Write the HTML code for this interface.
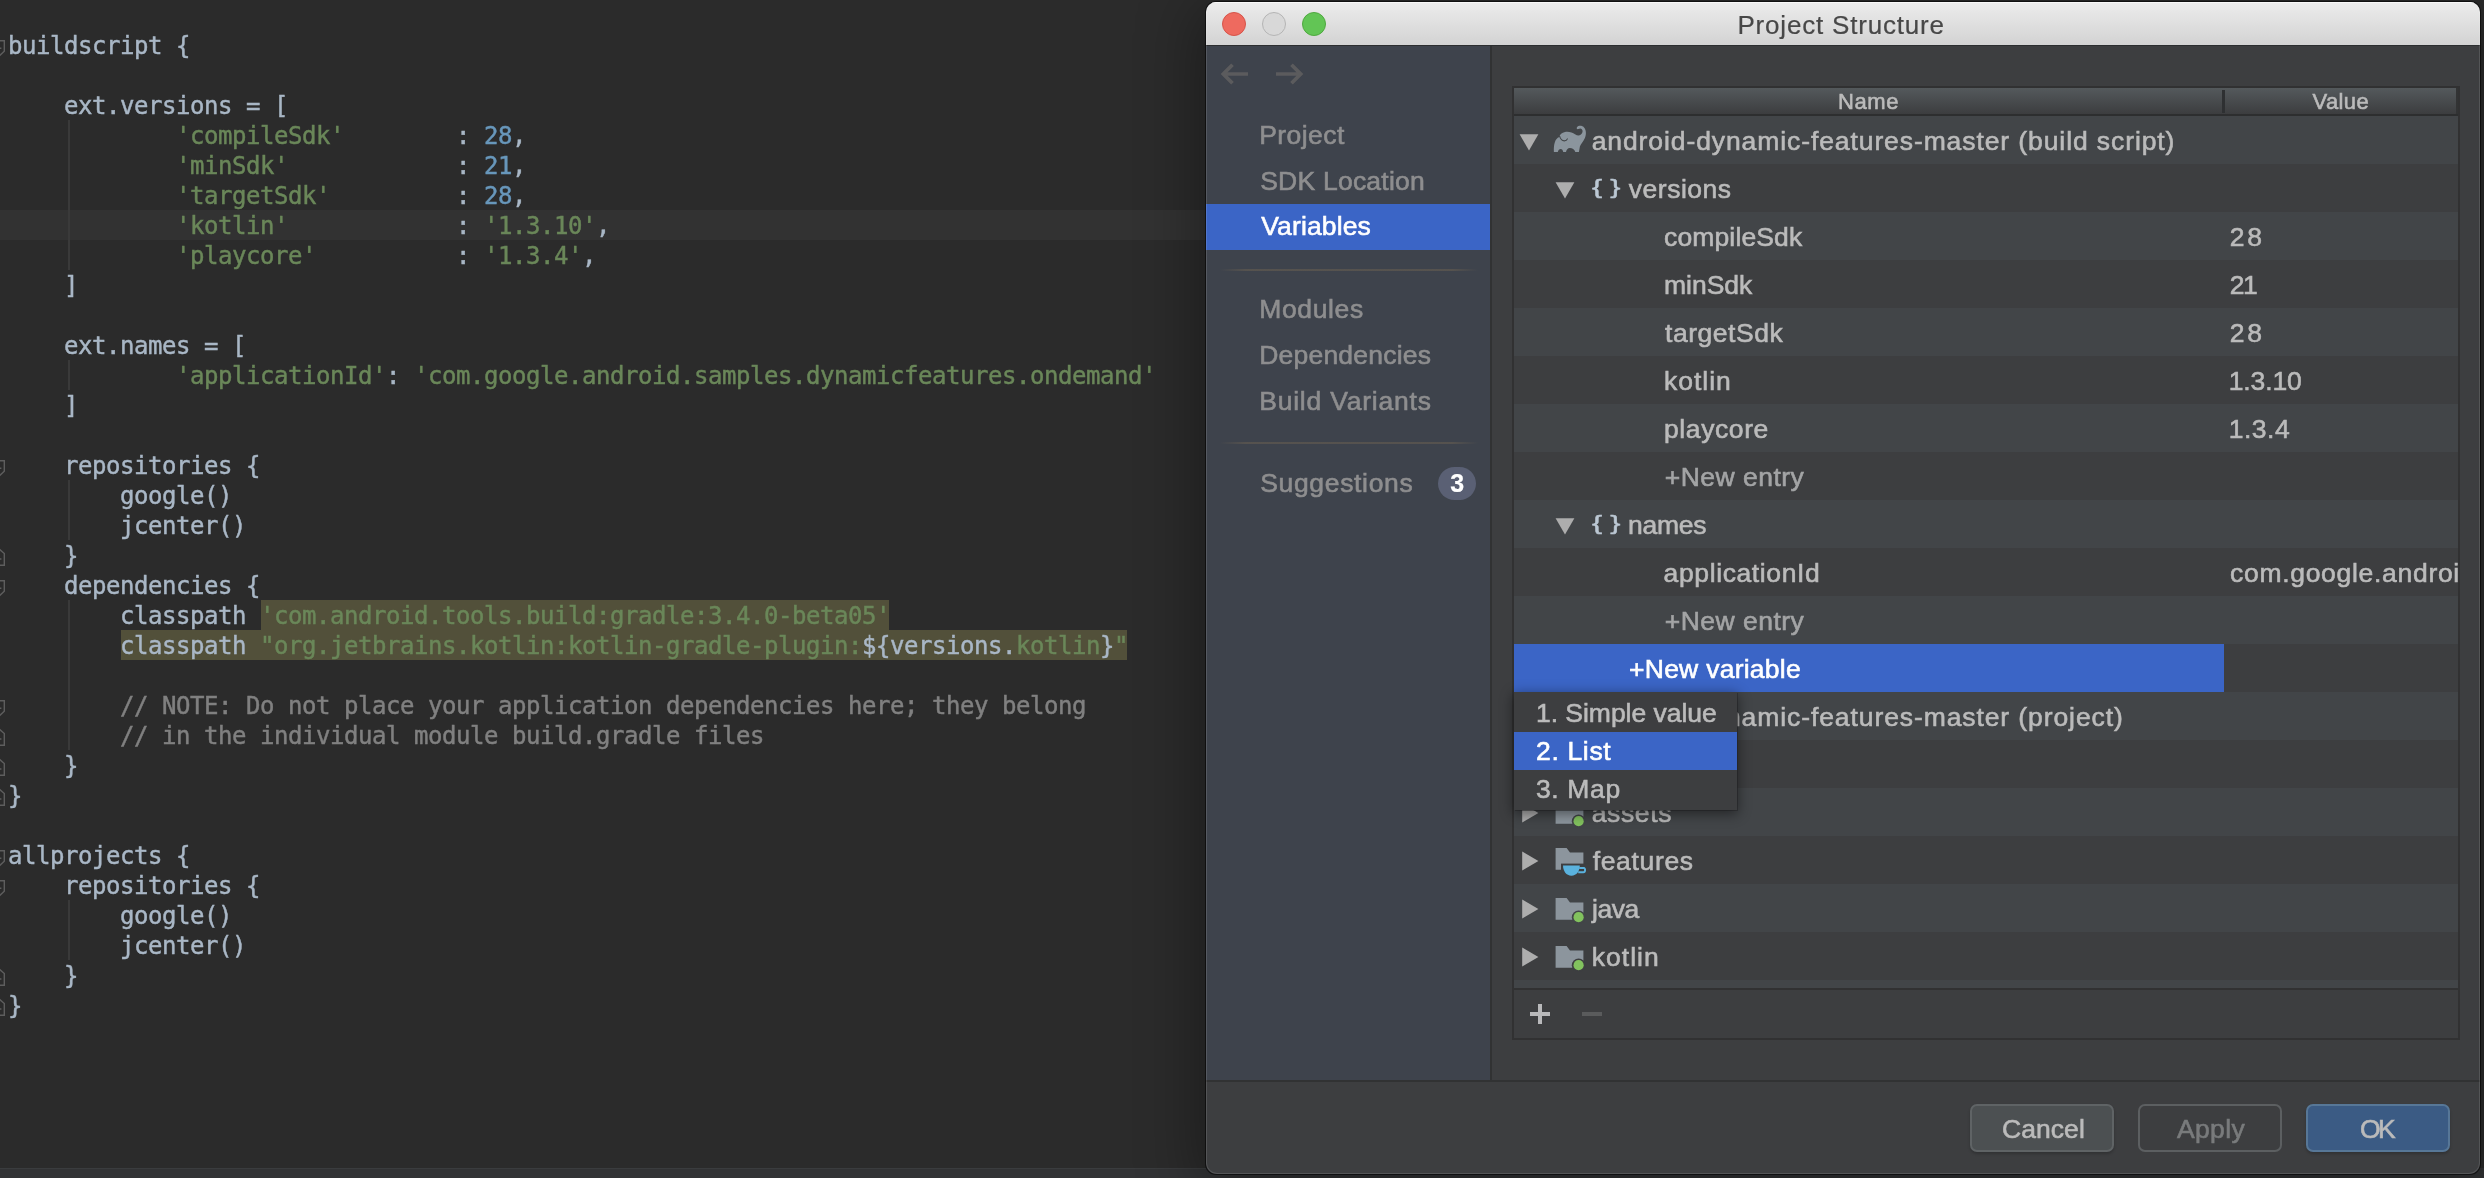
<!DOCTYPE html>
<html lang="en">
<head>
<meta charset="utf-8">
<title>Project Structure</title>
<style>
html,body{margin:0;padding:0}
body{width:2484px;height:1178px;background:#2b2b2b;overflow:hidden;position:relative;font-family:"Liberation Sans",sans-serif}
.abs{position:absolute}
.t{position:absolute;white-space:pre;line-height:40px;font-family:"Liberation Sans",sans-serif;-webkit-text-stroke:0.6px currentColor}
#editor{position:absolute;left:0;top:0;width:1210px;height:1178px;overflow:hidden;will-change:transform}
.ln{position:absolute;left:8px;height:30px;line-height:30px;white-space:pre;font-family:"DejaVu Sans Mono","Liberation Mono",monospace;font-size:24px;letter-spacing:-0.449px;color:#a9b7c6;-webkit-text-stroke:0.45px currentColor}
.s{color:#6a8759}.n{color:#6897bb}.c{color:#808080}
.hl{position:absolute;height:30px;background:#52503a}
.guide{position:absolute;width:2px;background:#3a3a3a}
#dialog{position:absolute;left:1206px;top:2px;width:1274px;height:1172px;border-radius:10px 10px 11px 11px;background:#3d3e40;overflow:hidden;will-change:transform}
#shadow{position:absolute;left:1206px;top:2px;width:1274px;height:1172px;border-radius:10px;box-shadow:0 12px 60px 8px rgba(0,0,0,0.36),0 0 0 1px rgba(0,0,0,0.55)}
</style>
</head>
<body>

<div id="editor">
<div class="abs" style="left:0;top:210px;width:1210px;height:30px;background:#323232"></div>
<div class="hl" style="left:261px;top:600px;width:628px"></div>
<div class="hl" style="left:121px;top:630px;width:1006px"></div>
<div class="guide" style="left:68px;top:120px;height:150px"></div>
<div class="guide" style="left:68px;top:360px;height:30px"></div>
<div class="guide" style="left:68px;top:480px;height:60px"></div>
<div class="guide" style="left:68px;top:600px;height:150px"></div>
<div class="guide" style="left:68px;top:900px;height:60px"></div>
<div class="ln" style="top:31px">buildscript {</div>
<div class="ln" style="top:91px">    ext.versions = [</div>
<div class="ln" style="top:121px">            <span class="s">&#x27;compileSdk&#x27;</span>        : <span class="n">28</span>,</div>
<div class="ln" style="top:151px">            <span class="s">&#x27;minSdk&#x27;</span>            : <span class="n">21</span>,</div>
<div class="ln" style="top:181px">            <span class="s">&#x27;targetSdk&#x27;</span>         : <span class="n">28</span>,</div>
<div class="ln" style="top:211px">            <span class="s">&#x27;kotlin&#x27;</span>            : <span class="s">&#x27;1.3.10&#x27;</span>,</div>
<div class="ln" style="top:241px">            <span class="s">&#x27;playcore&#x27;</span>          : <span class="s">&#x27;1.3.4&#x27;</span>,</div>
<div class="ln" style="top:271px">    ]</div>
<div class="ln" style="top:331px">    ext.names = [</div>
<div class="ln" style="top:361px">            <span class="s">&#x27;applicationId&#x27;</span>: <span class="s">&#x27;com.google.android.samples.dynamicfeatures.ondemand&#x27;</span></div>
<div class="ln" style="top:391px">    ]</div>
<div class="ln" style="top:451px">    repositories {</div>
<div class="ln" style="top:481px">        google()</div>
<div class="ln" style="top:511px">        jcenter()</div>
<div class="ln" style="top:541px">    }</div>
<div class="ln" style="top:571px">    dependencies {</div>
<div class="ln" style="top:601px">        classpath <span class="s">&#x27;com.android.tools.build:gradle:3.4.0-beta05&#x27;</span></div>
<div class="ln" style="top:631px">        classpath <span class="s">&quot;org.jetbrains.kotlin:kotlin-gradle-plugin:</span>${versions.<span class="s">kotlin</span>}<span class="s">&quot;</span></div>
<div class="ln" style="top:691px">        <span class="c">// NOTE: Do not place your application dependencies here; they belong</span></div>
<div class="ln" style="top:721px">        <span class="c">// in the individual module build.gradle files</span></div>
<div class="ln" style="top:751px">    }</div>
<div class="ln" style="top:781px">}</div>
<div class="ln" style="top:841px">allprojects {</div>
<div class="ln" style="top:871px">    repositories {</div>
<div class="ln" style="top:901px">        google()</div>
<div class="ln" style="top:931px">        jcenter()</div>
<div class="ln" style="top:961px">    }</div>
<div class="ln" style="top:991px">}</div>
<svg class="abs" style="left:0;top:40px" width="7" height="18" viewBox="0 0 7 18"><path d="M-1 0.7H4.3V11.2L-1 16.3M-1 8.2H1.4" fill="none" stroke="#5e5e5e" stroke-width="1.4"/></svg>
<svg class="abs" style="left:0;top:460px" width="7" height="18" viewBox="0 0 7 18"><path d="M-1 0.7H4.3V11.2L-1 16.3M-1 8.2H1.4" fill="none" stroke="#5e5e5e" stroke-width="1.4"/></svg>
<svg class="abs" style="left:0;top:580px" width="7" height="18" viewBox="0 0 7 18"><path d="M-1 0.7H4.3V11.2L-1 16.3M-1 8.2H1.4" fill="none" stroke="#5e5e5e" stroke-width="1.4"/></svg>
<svg class="abs" style="left:0;top:700px" width="7" height="18" viewBox="0 0 7 18"><path d="M-1 0.7H4.3V11.2L-1 16.3M-1 8.2H1.4" fill="none" stroke="#5e5e5e" stroke-width="1.4"/></svg>
<svg class="abs" style="left:0;top:850px" width="7" height="18" viewBox="0 0 7 18"><path d="M-1 0.7H4.3V11.2L-1 16.3M-1 8.2H1.4" fill="none" stroke="#5e5e5e" stroke-width="1.4"/></svg>
<svg class="abs" style="left:0;top:880px" width="7" height="18" viewBox="0 0 7 18"><path d="M-1 0.7H4.3V11.2L-1 16.3M-1 8.2H1.4" fill="none" stroke="#5e5e5e" stroke-width="1.4"/></svg>
<svg class="abs" style="left:0;top:548px" width="7" height="19" viewBox="0 0 7 19"><path d="M-1 0.8L4.3 5.6V17.2H-1M-1 11H1.4" fill="none" stroke="#5e5e5e" stroke-width="1.4"/></svg>
<svg class="abs" style="left:0;top:728px" width="7" height="19" viewBox="0 0 7 19"><path d="M-1 0.8L4.3 5.6V17.2H-1M-1 11H1.4" fill="none" stroke="#5e5e5e" stroke-width="1.4"/></svg>
<svg class="abs" style="left:0;top:758px" width="7" height="19" viewBox="0 0 7 19"><path d="M-1 0.8L4.3 5.6V17.2H-1M-1 11H1.4" fill="none" stroke="#5e5e5e" stroke-width="1.4"/></svg>
<svg class="abs" style="left:0;top:788px" width="7" height="19" viewBox="0 0 7 19"><path d="M-1 0.8L4.3 5.6V17.2H-1M-1 11H1.4" fill="none" stroke="#5e5e5e" stroke-width="1.4"/></svg>
<svg class="abs" style="left:0;top:968px" width="7" height="19" viewBox="0 0 7 19"><path d="M-1 0.8L4.3 5.6V17.2H-1M-1 11H1.4" fill="none" stroke="#5e5e5e" stroke-width="1.4"/></svg>
<svg class="abs" style="left:0;top:998px" width="7" height="19" viewBox="0 0 7 19"><path d="M-1 0.8L4.3 5.6V17.2H-1M-1 11H1.4" fill="none" stroke="#5e5e5e" stroke-width="1.4"/></svg>
<div class="abs" style="left:0;top:1168px;width:1210px;height:10px;background:#323335"></div>
<div class="abs" style="left:0;top:1168px;width:1210px;height:1px;background:#3a3c3e"></div>
</div>
<div class="abs" style="left:1206px;top:0;width:1278px;height:1178px;background:#2b2b2b"></div>
<div class="abs" style="left:1206px;top:1168px;width:1278px;height:10px;background:#323335"></div>
<div id="shadow"></div>
<div id="dialog">
<div class="abs" style="left:0px;top:0px;width:1274px;height:43px;background:linear-gradient(#ececec,#d3d3d3);"></div>
<div class="abs" style="left:0px;top:0px;width:1274px;height:1px;background:#f8f8f8;"></div>
<div class="abs" style="left:0px;top:43px;width:1274px;height:1px;background:#2c2e30;"></div>
<div class="abs" style="left:16px;top:10px;width:24px;height:24px;border-radius:50%;box-sizing:border-box;background:#ee6a5f;border:1px solid #d5544a"></div>
<div class="abs" style="left:56px;top:10px;width:24px;height:24px;border-radius:50%;box-sizing:border-box;background:#d8d8d8;border:1px solid #b4b4b4"></div>
<div class="abs" style="left:96px;top:10px;width:24px;height:24px;border-radius:50%;box-sizing:border-box;background:#62c555;border:1px solid #4fa83f"></div>
<div class="t" style="left:531.40px;top:2.99px;font-size:26px;color:#484848;letter-spacing:0.814px;-webkit-text-stroke-width:0.2px;">Project Structure</div>
<div class="abs" style="left:0px;top:44px;width:284px;height:1034px;background:#3e434c;"></div>
<div class="abs" style="left:284px;top:44px;width:2px;height:1034px;background:#313233;"></div>
<div class="abs" style="left:0px;top:202px;width:284px;height:46px;background:#3b65c6;"></div>
<div class="abs" style="left:14px;top:267px;width:258px;height:2px;background:linear-gradient(90deg,rgba(88,84,79,0),#58544f 10%,#58544f 90%,rgba(88,84,79,0));opacity:.9"></div>
<div class="abs" style="left:14px;top:440px;width:258px;height:2px;background:linear-gradient(90deg,rgba(88,84,79,0),#58544f 10%,#58544f 90%,rgba(88,84,79,0));opacity:.9"></div>
<svg class="abs" style="left:12px;top:58px" width="90" height="28" viewBox="0 0 90 28">
<g fill="none" stroke="#5b5b5d" stroke-width="3.7"><path d="M30 14H6M14.5 4.8L5.3 14L14.5 23.2"/><path d="M58 14H82M73.5 4.8L82.7 14L73.5 23.2"/></g></svg>
<div class="t" style="left:53.20px;top:112.72px;font-size:26.5px;color:#8e8e8f;letter-spacing:0.448px;">Project</div>
<div class="t" style="left:54.20px;top:158.52px;font-size:26.5px;color:#8e8e8f;letter-spacing:0.227px;">SDK Location</div>
<div class="t" style="left:55.20px;top:204.32px;font-size:26.5px;color:#ffffff;letter-spacing:0.142px;">Variables</div>
<div class="t" style="left:53.20px;top:286.92px;font-size:26.5px;color:#8e8e8f;letter-spacing:0.648px;">Modules</div>
<div class="t" style="left:53.20px;top:332.82px;font-size:26.5px;color:#8e8e8f;letter-spacing:0.211px;">Dependencies</div>
<div class="t" style="left:53.20px;top:378.72px;font-size:26.5px;color:#8e8e8f;letter-spacing:0.786px;">Build Variants</div>
<div class="t" style="left:54.20px;top:460.72px;font-size:26.5px;color:#8e8e8f;letter-spacing:0.670px;">Suggestions</div>
<div class="abs" style="left:232px;top:464.5px;width:38px;height:33.5px;background:#5a6074;border-radius:17px"></div>
<div class="t" style="left:244.20px;top:461.24px;font-size:25px;color:#ffffff;font-weight:700;-webkit-text-stroke-width:0.2px;">3</div>
<div class="abs" style="left:306px;top:84px;width:948px;height:954px;background:transparent;border:2px solid #313132;box-sizing:border-box"></div>
<div class="abs" style="left:308px;top:86px;width:942px;height:26px;background:linear-gradient(#54595c,#3c3d3f);"></div>
<div class="abs" style="left:1250px;top:86px;width:2px;height:26px;background:#323334;"></div>
<div class="abs" style="left:308px;top:112px;width:944px;height:2px;background:#2d2e2f;"></div>
<div class="abs" style="left:1016px;top:88px;width:3px;height:23px;background:#2e3032;"></div>
<div class="t" style="left:632.00px;top:80.38px;font-size:22px;color:#bbbbbb;letter-spacing:0.617px;">Name</div>
<div class="t" style="left:1106.60px;top:80.38px;font-size:22px;color:#bbbbbb;letter-spacing:0.350px;">Value</div>
<div class="abs" style="left:308px;top:114px;width:944px;height:48px;background:#424548;"></div>
<div class="abs" style="left:308px;top:162px;width:944px;height:48px;background:#3d3e40;"></div>
<div class="abs" style="left:308px;top:210px;width:944px;height:48px;background:#424548;"></div>
<div class="abs" style="left:308px;top:258px;width:944px;height:48px;background:#3d3e40;"></div>
<div class="abs" style="left:308px;top:306px;width:944px;height:48px;background:#424548;"></div>
<div class="abs" style="left:308px;top:354px;width:944px;height:48px;background:#3d3e40;"></div>
<div class="abs" style="left:308px;top:402px;width:944px;height:48px;background:#424548;"></div>
<div class="abs" style="left:308px;top:450px;width:944px;height:48px;background:#3d3e40;"></div>
<div class="abs" style="left:308px;top:498px;width:944px;height:48px;background:#424548;"></div>
<div class="abs" style="left:308px;top:546px;width:944px;height:48px;background:#3d3e40;"></div>
<div class="abs" style="left:308px;top:594px;width:944px;height:48px;background:#424548;"></div>
<div class="abs" style="left:308px;top:642px;width:944px;height:48px;background:#3d3e40;"></div>
<div class="abs" style="left:308px;top:690px;width:944px;height:48px;background:#424548;"></div>
<div class="abs" style="left:308px;top:738px;width:944px;height:48px;background:#3d3e40;"></div>
<div class="abs" style="left:308px;top:786px;width:944px;height:48px;background:#424548;"></div>
<div class="abs" style="left:308px;top:834px;width:944px;height:48px;background:#3d3e40;"></div>
<div class="abs" style="left:308px;top:882px;width:944px;height:48px;background:#424548;"></div>
<div class="abs" style="left:308px;top:930px;width:944px;height:48px;background:#3d3e40;"></div>
<div class="abs" style="left:308px;top:978px;width:944px;height:8px;background:#424548;"></div>
<div class="abs" style="left:308px;top:642px;width:710px;height:48px;background:#3b65c6;"></div>
<div class="abs" style="left:308px;top:986px;width:944px;height:2px;background:#313132;"></div>
<div class="abs" style="left:308px;top:988px;width:944px;height:48px;background:#3d3e40;"></div>
<div class="abs" style="left:324px;top:1010.2px;width:20px;height:3.7px;background:#b9b9bb;"></div>
<div class="abs" style="left:332.0999999999999px;top:1002px;width:3.9px;height:20px;background:#b9b9bb;"></div>
<div class="abs" style="left:376px;top:1010.2px;width:20px;height:3.7px;background:#5a5b5c;"></div>
<svg class="abs" style="left:313px;top:132px" width="20" height="17" viewBox="0 0 20 17"><path d="M0.6 0.2H19.4L10 16.4Z" fill="#adadad"/></svg>
<svg class="abs" style="left:347px;top:123px" width="35" height="28" viewBox="0 0 35 28">
<path fill="#8b959d" d="M0.9 26.9C0.6 19 2 13.5 6.3 11.9C6.6 9.5 9 7.4 12 6.9C16 6.2 19.5 7.6 22 9.2C24 10.4 26 11 27.6 9.8C29.6 8.3 30.3 5.6 28.8 4.2C27.8 3.3 26.4 3.6 25.4 4.1C24.2 4.7 23.2 3.4 24 2.2C25.4 0.4 29 0.3 31 2.4C33.4 5 33.4 9.5 31.9 13C30.4 16.5 27.6 19.5 26.9 21.5L25.9 26.9H22.3C21.6 24.6 19.2 23.1 16.8 23.1C14.8 23.1 13.4 25 13 26.9H10.2C9.9 25.2 8.9 24 7.7 24C6.4 24 5.2 25.2 4.8 26.9Z"/>
<path fill="none" stroke="#424548" stroke-width="1.1" stroke-linecap="round" d="M6.6 11.2C7.4 14 9.4 15.9 11.3 15.9C12.7 15.9 13.9 15.1 14.4 13.9"/>
</svg>
<div class="t" style="left:385.70px;top:118.82px;font-size:26.5px;color:#bbbbbb;letter-spacing:0.906px;">android-dynamic-features-master (build script)</div>
<svg class="abs" style="left:349px;top:180px" width="20" height="17" viewBox="0 0 20 17"><path d="M0.6 0.2H19.4L10 16.4Z" fill="#adadad"/></svg>
<div class="t" style="left:385.90px;top:164.82px;font-size:21px;color:#bcc8d4;letter-spacing:-0.131px;-webkit-text-stroke-width:0.45px;transform:scaleX(1.45);transform-origin:0 50%;">{ }</div>
<div class="t" style="left:422.80px;top:166.82px;font-size:26.5px;color:#bbbbbb;letter-spacing:0.511px;">versions</div>
<div class="t" style="left:458.00px;top:214.82px;font-size:26.5px;color:#bbbbbb;letter-spacing:0.141px;">compileSdk</div>
<div class="t" style="left:1023.70px;top:214.82px;font-size:26.5px;color:#bbbbbb;letter-spacing:2.862px;">28</div>
<div class="t" style="left:458.00px;top:262.82px;font-size:26.5px;color:#bbbbbb;letter-spacing:-0.023px;">minSdk</div>
<div class="t" style="left:1023.70px;top:262.82px;font-size:26.5px;color:#bbbbbb;letter-spacing:-1.438px;">21</div>
<div class="t" style="left:459.00px;top:310.82px;font-size:26.5px;color:#bbbbbb;letter-spacing:0.528px;">targetSdk</div>
<div class="t" style="left:1023.70px;top:310.82px;font-size:26.5px;color:#bbbbbb;letter-spacing:2.862px;">28</div>
<div class="t" style="left:458.00px;top:358.82px;font-size:26.5px;color:#bbbbbb;letter-spacing:0.975px;">kotlin</div>
<div class="t" style="left:1022.70px;top:358.82px;font-size:26.5px;color:#bbbbbb;letter-spacing:-0.128px;">1.3.10</div>
<div class="t" style="left:458.00px;top:406.82px;font-size:26.5px;color:#bbbbbb;letter-spacing:0.596px;">playcore</div>
<div class="t" style="left:1022.70px;top:406.82px;font-size:26.5px;color:#bbbbbb;letter-spacing:0.525px;">1.3.4</div>
<div class="t" style="left:458.80px;top:454.82px;font-size:26.5px;color:#a3a4a5;letter-spacing:0.465px;">+New entry</div>
<svg class="abs" style="left:349px;top:516px" width="20" height="17" viewBox="0 0 20 17"><path d="M0.6 0.2H19.4L10 16.4Z" fill="#adadad"/></svg>
<div class="t" style="left:385.90px;top:500.82px;font-size:21px;color:#bcc8d4;letter-spacing:-0.131px;-webkit-text-stroke-width:0.45px;transform:scaleX(1.45);transform-origin:0 50%;">{ }</div>
<div class="t" style="left:422.00px;top:502.82px;font-size:26.5px;color:#bbbbbb;letter-spacing:-0.247px;">names</div>
<div class="t" style="left:457.60px;top:550.82px;font-size:26.5px;color:#bbbbbb;letter-spacing:0.611px;">applicationId</div>
<div class="abs" style="left:1020px;top:546px;width:233px;height:48px;overflow:hidden">
<div class="t" style="left:4.00px;top:4.82px;font-size:26.5px;color:#bbbbbb;letter-spacing:0.701px;">com.google.android.samples.dynamicfeatures.ondemand</div>
</div>
<div class="t" style="left:458.80px;top:598.82px;font-size:26.5px;color:#a3a4a5;letter-spacing:0.465px;">+New entry</div>
<div class="t" style="left:423.00px;top:646.82px;font-size:26.5px;color:#ffffff;letter-spacing:0.257px;">+New variable</div>
<svg class="abs" style="left:313px;top:708px" width="20" height="17" viewBox="0 0 20 17"><path d="M0.6 0.2H19.4L10 16.4Z" fill="#adadad"/></svg>
<div class="t" style="left:385.70px;top:694.82px;font-size:26.5px;color:#bbbbbb;letter-spacing:0.907px;">android-dynamic-features-master (project)</div>
<svg class="abs" style="left:316px;top:801px" width="17" height="20" viewBox="0 0 17 20"><path d="M0.2 0.6V19.4L16.4 10Z" fill="#adadad"/></svg>
<svg class="abs" style="left:349px;top:798px" width="34" height="32" viewBox="0 0 34 32"><path fill="#8c959d" d="M0.6 2H11.6L15 6.4H28.4V23.8H0.6Z"/><circle cx="23.6" cy="21.2" r="6.8" fill="#424548"/><circle cx="23.6" cy="21.2" r="5.1" fill="#82c25e"/></svg>
<div class="t" style="left:385.70px;top:790.82px;font-size:26.5px;color:#bbbbbb;letter-spacing:0.632px;">assets</div>
<svg class="abs" style="left:316px;top:849px" width="17" height="20" viewBox="0 0 17 20"><path d="M0.2 0.6V19.4L16.4 10Z" fill="#adadad"/></svg>
<svg class="abs" style="left:349px;top:844px" width="34" height="32" viewBox="0 0 34 32"><path fill="#8c959d" d="M0.6 2H11.6L15 6.4H28.4V23.8H0.6Z"/><path fill="#3d3e40" d="M6 17.6H34V32H6Z"/><path fill="#5ab2de" d="M8 19.6H24.8C24.8 25 21.6 29.8 16.4 29.8C11.2 29.8 8 25 8 19.6Z"/><path fill="none" stroke="#5ab2de" stroke-width="1.9" d="M24.2 22H28.8C30.6 22 30.6 26.2 28.4 26.2H23.2"/></svg>
<div class="t" style="left:386.70px;top:838.82px;font-size:26.5px;color:#bbbbbb;letter-spacing:0.657px;">features</div>
<svg class="abs" style="left:316px;top:897px" width="17" height="20" viewBox="0 0 17 20"><path d="M0.2 0.6V19.4L16.4 10Z" fill="#adadad"/></svg>
<svg class="abs" style="left:349px;top:894px" width="34" height="32" viewBox="0 0 34 32"><path fill="#8c959d" d="M0.6 2H11.6L15 6.4H28.4V23.8H0.6Z"/><circle cx="23.6" cy="21.2" r="6.8" fill="#424548"/><circle cx="23.6" cy="21.2" r="5.1" fill="#82c25e"/></svg>
<div class="t" style="left:386.00px;top:886.82px;font-size:26.5px;color:#bbbbbb;letter-spacing:-0.492px;">java</div>
<svg class="abs" style="left:316px;top:945px" width="17" height="20" viewBox="0 0 17 20"><path d="M0.2 0.6V19.4L16.4 10Z" fill="#adadad"/></svg>
<svg class="abs" style="left:349px;top:942px" width="34" height="32" viewBox="0 0 34 32"><path fill="#8c959d" d="M0.6 2H11.6L15 6.4H28.4V23.8H0.6Z"/><circle cx="23.6" cy="21.2" r="6.8" fill="#3d3e40"/><circle cx="23.6" cy="21.2" r="5.1" fill="#82c25e"/></svg>
<div class="t" style="left:385.70px;top:934.82px;font-size:26.5px;color:#bbbbbb;letter-spacing:1.035px;">kotlin</div>
<div class="abs" style="left:308px;top:690px;width:222.5px;height:117.5px;background:#3d3e40;box-shadow:0 3px 12px 1px rgba(0,0,0,0.45),1px 1px 0 0 rgba(40,42,44,0.5)"></div>
<div class="abs" style="left:308px;top:730px;width:222.5px;height:38px;background:#3b65c6;"></div>
<div class="t" style="left:330.00px;top:691.12px;font-size:26.5px;color:#bbbbbb;letter-spacing:-0.031px;">1. Simple value</div>
<div class="t" style="left:330.00px;top:729.02px;font-size:26.5px;color:#ffffff;letter-spacing:0.660px;">2. List</div>
<div class="t" style="left:330.00px;top:767.02px;font-size:26.5px;color:#bbbbbb;letter-spacing:0.625px;">3. Map</div>
<div class="abs" style="left:0px;top:1078px;width:1274px;height:2px;background:#313233;"></div>
<div class="abs" style="left:0;top:0;width:1274px;height:1172px;box-sizing:border-box;border-radius:10px 10px 11px 11px;border:1px solid rgba(255,255,255,0.12);border-top-color:transparent;pointer-events:none"></div>
<div class="abs" style="left:764px;top:1102px;width:144px;height:48px;background:#4c5052;box-sizing:border-box;border-radius:7px;border:2px solid #5f6365;box-shadow:0 2px 3px rgba(0,0,0,0.2)"></div>
<div class="abs" style="left:932px;top:1102px;width:144px;height:48px;background:#3d3e40;box-sizing:border-box;border-radius:7px;border:2px solid #5c5f61"></div>
<div class="abs" style="left:1100px;top:1102px;width:144px;height:48px;background:#3b5b84;box-sizing:border-box;border-radius:7px;border:2px solid #577797;box-shadow:0 2px 3px rgba(0,0,0,0.2)"></div>
<div class="t" style="left:796.10px;top:1106.72px;font-size:26.5px;color:#bbbbbb;letter-spacing:0.040px;">Cancel</div>
<div class="t" style="left:971.00px;top:1106.72px;font-size:26.5px;color:#797b7c;letter-spacing:0.340px;">Apply</div>
<div class="t" style="left:1154.00px;top:1106.72px;font-size:26.5px;color:#bbbbbb;letter-spacing:-2.613px;">OK</div>
</div>
</body>
</html>
